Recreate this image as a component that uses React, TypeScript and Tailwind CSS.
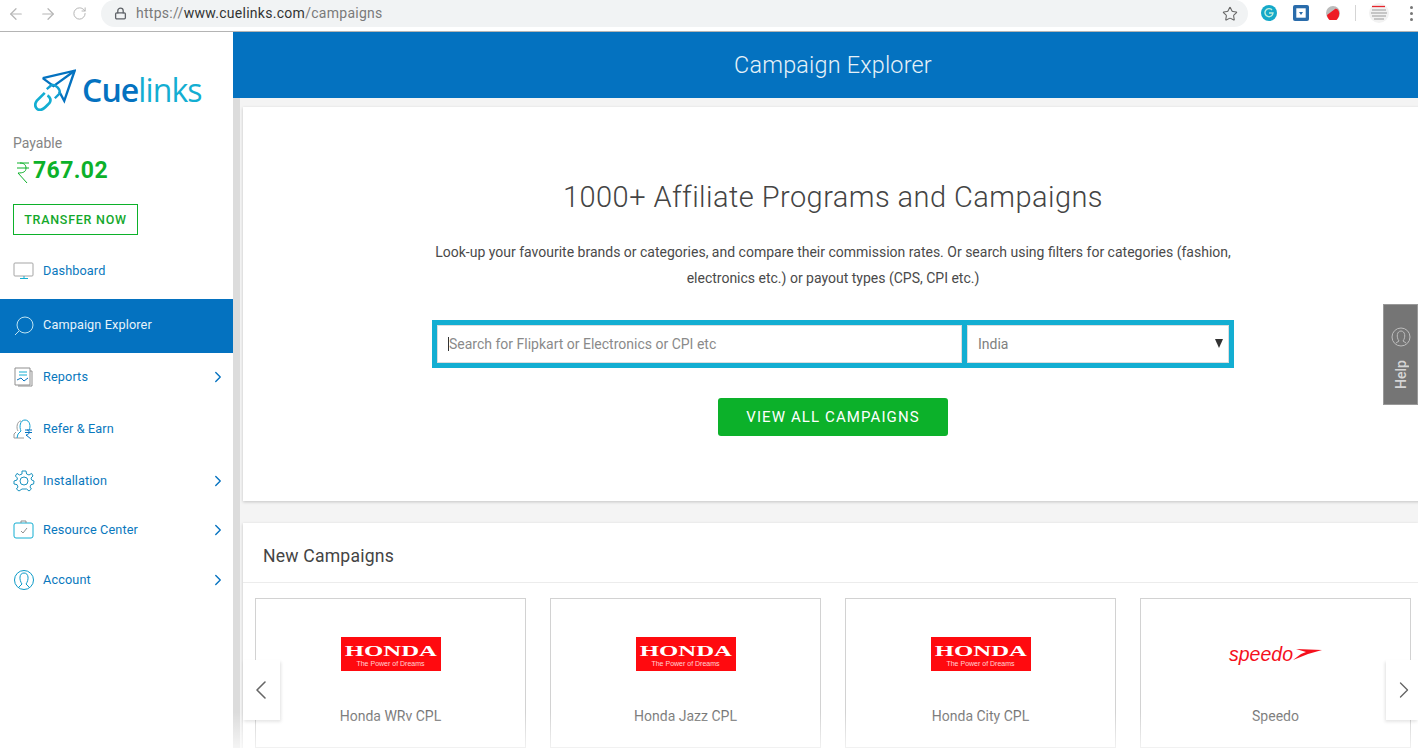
import { ArrowLeft, ArrowRight, ChevronLeft, ChevronRight, Lock, RotateCw, Star } from 'lucide-react';
import type { ReactNode } from 'react';

const iconProps = { width: 22, height: 22, viewBox: '0 0 22 22', fill: 'none', strokeWidth: 1 };

function Logo() {
  return (
    <div className="flex items-center pl-[34px] h-[42px]">
      <svg width="42" height="42" viewBox="42 25 125 125" fill="none" className="mr-[6px] flex-none">
        <path d="M68 52 L163 30 L132 120 L117 92" stroke="#0472c0" strokeWidth="7" strokeLinejoin="miter" />
        <path d="M163 30 L100 76 L68 52" stroke="#0472c0" strokeWidth="7" />
        <path d="M80 85 L95 72 C108 72 122 86 118 98 L104 112" stroke="#13a0d2" strokeWidth="7" />
        <path d="M74 96 L50 120 C40 134 50 150 64 146 C72 144 78 136 88 126 C94 118 90 108 82 104" stroke="#13aed2" strokeWidth="8" />
      </svg>
      <span className="font-['Open_Sans',sans-serif] text-[32px] leading-[36px] tracking-[-0.9px] pb-[1px]">
        <span className="text-[#0472c0] font-semibold">Cue</span>
        <span className="text-[#13aed2] font-normal">links</span>
      </span>
    </div>
  );
}

function NavItem({ label, icon, arrow, active, height }: { label: string; icon: ReactNode; arrow?: boolean; active?: boolean; height: string }) {
  return (
    <div className={`flex items-center pl-[13px] pr-[6px] ${height} ${active ? 'bg-[#0472c0] text-[#e8f3fa]' : 'text-[#0a78bd]'}`}>
      <span className="w-[30px] flex-none">{icon}</span>
      <span className="flex-1 text-[12.7px] tracking-[0.12px]">{label}</span>
      {arrow && <ChevronRight size={18} strokeWidth={1.8} className="text-[#0472c0]" />}
    </div>
  );
}

function CampaignCard({ name, logo }: { name: string; logo: ReactNode }) {
  return (
    <div className="w-[271px] flex-none h-[150px] border border-[#d2d2d2] flex flex-col items-center">
      <div className="h-[100px] w-full flex items-center justify-center pt-[10px]">{logo}</div>
      <div className="w-full text-center pt-[7px] text-[14px] text-[#757575]">{name}</div>
    </div>
  );
}

function Honda() {
  return (
    <div className="w-[100px] h-[34px] bg-[#ff0a0f] flex flex-col items-center justify-center text-white">
      <span className="font-['Liberation_Serif',serif] font-bold text-[15px] leading-[14px] inline-block scale-x-[1.65] mt-[3px]">HONDA</span>
      <span className="font-['Liberation_Sans',sans-serif] text-[7px] leading-[9px] mt-[1px] opacity-80">The Power of Dreams</span>
    </div>
  );
}

function Speedo() {
  return (
    <div className="flex items-center text-[#f5101c]">
      <span className="font-['Liberation_Sans',sans-serif] italic text-[19.5px] leading-[20px]">speedo</span>
      <svg width="30" height="12" viewBox="0 0 30 12" className="-ml-[1px]">
        <path d="M4 1 L30 2 L16 6 L1 12 L9 6 L14 4 Z" fill="#f5101c" />
      </svg>
    </div>
  );
}

export default function App() {
  return (
    <div className="w-[1418px] h-[748px] overflow-hidden relative bg-white font-['Roboto',sans-serif]">
      {/* browser bar */}
      <div className="h-[32px] border-b border-[#b4b4b4] flex items-center pl-[7px] bg-white">
        <ArrowLeft size={18} strokeWidth={1.6} className="text-[#b5b5b5] mr-[14px] mb-[4px]" />
        <ArrowRight size={18} strokeWidth={1.6} className="text-[#b5b5b5] mr-[15px] mb-[4px]" />
        <RotateCw size={15} strokeWidth={1.6} className="text-[#b5b5b5] mr-[14px] mb-[4px]" />
        <div className="w-[1147px] h-[27px] bg-[#f1f3f4] rounded-full flex items-center pl-[13px] pr-[10px] mb-[4px] flex-none">
          <Lock size={13} strokeWidth={2.4} className="text-[#5f6368] mr-[9px]" />
          <span className="flex-1 text-[14px] text-[#7a7a7a] tracking-[0.28px]">
            https://<span className="text-[#333]">www.cuelinks.com</span>/campaigns
          </span>
          <Star size={16} strokeWidth={1.6} className="text-[#666]" />
        </div>
        <div className="flex items-center pl-[13px] mb-[5px]">
          <svg width="16" height="16" viewBox="0 0 16 16" className="mr-[16px]">
            <circle cx="8" cy="8" r="8" fill="#15a9c9" />
            <path d="M11 5 A4 4 0 1 0 12 8 H8" fill="none" stroke="#bfeedd" strokeWidth="1.4" />
          </svg>
          <svg width="16" height="16" viewBox="0 0 16 16" className="mr-[17px]">
            <rect width="16" height="16" rx="2" fill="#2a6cab" />
            <rect x="4" y="4" width="8" height="8" fill="#fff" stroke="#fff" strokeWidth="1.4" />
            <path d="M6 7 H10 L8 10 Z" fill="#2a6cab" />
          </svg>
          <svg width="14" height="14" viewBox="0 0 14 14" className="mr-[15px]">
            <circle cx="7" cy="7" r="7" fill="#bbb" />
            <path d="M1 9 A6 6 0 0 0 13 9 C14 5 11 2 9 3 Z" fill="#ee1c25" />
          </svg>
          <div className="w-px h-[16px] bg-[#d5d5d5] mr-[13px]" />
          <svg width="20" height="20" viewBox="0 0 20 20">
            <circle cx="10" cy="10" r="10" fill="#f2f2f2" />
            <path d="M3 7 H17 M2 10 H18 M3 13 H17 M5 16 H15" stroke="#b8b8b8" strokeWidth="1.3" />
            <path d="M3 3.5 H16" stroke="#e6242b" strokeWidth="1.3" />
          </svg>
          <div className="flex flex-col gap-[3px] ml-[21px]">
            <span className="w-[3px] h-[3px] rounded-full bg-[#777]" />
            <span className="w-[3px] h-[3px] rounded-full bg-[#777]" />
            <span className="w-[3px] h-[3px] rounded-full bg-[#777]" />
          </div>
        </div>
      </div>

      <div className="flex h-[716px]">
        {/* sidebar */}
        <aside className="w-[233px] flex-none bg-white pt-[37px]">
          <Logo />
          <div className="pl-[13px] mt-[24px] text-[14px] leading-[16px] text-[#858585]">Payable</div>
          <div className="pl-[16px] mt-[5px] flex items-center h-[30px] text-[#0cb12a]">
            <svg width="14" height="23" viewBox="0 0 14 23" fill="none" stroke="#0cb12a" strokeWidth="1" className="mr-[3px] mt-[3px] flex-none">
              <path d="M1 2 H13 M1 7 H13 M4 2 C8 2 10 4 10 7 C10 11 7 12 2 12 L11 22" />
            </svg>
            <span className="text-[23px] font-bold tracking-[0.4px] leading-[30px]">767.02</span>
          </div>
          <div className="ml-[13px] mt-[18px] w-[125px] h-[31px] border border-[#0cb12a] flex items-center justify-center pt-[1px] text-[12.5px] font-medium tracking-[0.75px] text-[#14a82c]">
            TRANSFER NOW
          </div>
          <nav className="mt-[9px]">
            <NavItem
              label="Dashboard"
              height="h-[55px] pb-[2px]"
              icon={
                <svg {...iconProps} stroke="#a5a5a5">
                  <rect x="1" y="3" width="19" height="13" rx="1" />
                  <path d="M11 16 V18 M7 18.5 H15" stroke="#13aed2" />
                </svg>
              }
            />
            <NavItem
              active
              label="Campaign Explorer"
              height="h-[54px] pb-[2px]"
              icon={
                <svg {...iconProps} stroke="#bfe4f2">
                  <circle cx="12" cy="11" r="8" />
                  <path d="M6 17 L2 21" />
                </svg>
              }
            />
            <NavItem
              arrow
              label="Reports"
              height="h-[48px]"
              icon={
                <svg {...iconProps} stroke="#8f8f8f">
                  <path d="M2 2 H17 V19 H2 Z" />
                  <path d="M17 5 H19 V20 H5" />
                  <path d="M6 6 H14 M6 9 H14" stroke="#13aed2" />
                  <path d="M4 14 L8 12 L11 15 L15 12" stroke="#0472c0" />
                </svg>
              }
            />
            <NavItem
              label="Refer & Earn"
              height="h-[55px]"
              icon={
                <svg {...iconProps} stroke="#13a0d2">
                  <path d="M5 13 C3 10 4 3 8 3 M3 14 L1 16 V20 H11" stroke="#9a9a9a" />
                  <path d="M8 13 C6 9 7 2 12 2 C17 2 18 9 16 12 M8 13 L5 16 L4 20" />
                  <path d="M12 12 H19 M12 14.5 H19 M14 12 C17 12 17 17 13 17 L18 21" stroke="#0472c0" />
                </svg>
              }
            />
            <NavItem
              arrow
              label="Installation"
              height="h-[49px]"
              icon={
                <svg {...iconProps} stroke="#1a93bf">
                  <path d="M9 1 H13 L13.6 4 L16 5 L18.6 3.4 L20 6 L18 8 L18.6 10 L21 11 L20.6 14 L18 14.6 L17 17 L18.4 19 L16 21 L13.6 19 H9 L6 21 L3.4 19 L5 17 L4 14.6 L1 14 V11 L4 10 L4.4 8 L2.4 6 L4 3.4 L6.4 5 L9 4 Z" />
                  <circle cx="11" cy="11" r="4" />
                </svg>
              }
            />
            <NavItem
              arrow
              label="Resource Center"
              height="h-[49px]"
              icon={
                <svg {...iconProps} stroke="#13aed2">
                  <rect x="1" y="4" width="19" height="15" rx="2" />
                  <path d="M8 4 V2 H13 V4" stroke="#8f8f8f" />
                  <path d="M8 12 L10 14 L14 9" stroke="#8f8f8f" />
                </svg>
              }
            />
            <NavItem
              arrow
              label="Account"
              height="h-[52px]"
              icon={
                <svg {...iconProps} stroke="#0a9ac8">
                  <circle cx="11" cy="11" r="9.5" />
                  <path d="M9 15 C6 11 6 4 11 4 C16 4 16 11 13 15 L16 18 M9 15 L6 18" />
                </svg>
              }
            />
          </nav>
        </aside>

        {/* main */}
        <main className="flex-1 min-w-0 bg-[#f4f4f4] border-l-[7px] border-[#dcdcdc]">
          <header className="-ml-[7px] h-[66px] bg-[#0472c0] flex items-center justify-center text-[23.4px] font-light text-[#e6f1f8] tracking-[0.2px] pl-[15px] pt-[1px]">
            Campaign Explorer
          </header>
          <div className="pl-[3px] pt-[9px]">
            <section className="w-[1180px] h-[394px] bg-white shadow-[0_1px_3px_rgba(0,0,0,0.2)] flex flex-col items-center pt-[72px]">
              <h1 className="text-[29px] leading-[36px] font-light text-[#444] tracking-[0.44px]">1000+ Affiliate Programs and Campaigns</h1>
              <p className="mt-[24px] w-[820px] text-center text-[14px] leading-[26px] text-[#4a4a4a]">
                Look-up your favourite brands or categories, and compare their commission rates. Or search using filters for categories (fashion,
                electronics etc.) or payout types (CPS, CPI etc.)
              </p>
              <div className="mt-[29px] w-[802px] h-[48px] bg-[#13aed2] p-[5px] flex gap-[5px]">
                <div className="w-[525px] bg-white border border-[#dddddd] flex items-center pl-[10px] text-[14px] text-[#8a8a8a]">
                  <span className="w-px h-[14px] bg-[#333]" />
                  Search for Flipkart or Electronics or CPI etc
                </div>
                <div className="flex-1 bg-white border border-[#dddddd] flex items-center pl-[10px] pr-[5px] justify-between text-[14px] text-[#808080]">
                  <span>India</span>
                  <span className="w-0 h-0 border-l-[4px] border-r-[4px] border-t-[9px] border-l-transparent border-r-transparent border-t-[#333] mb-[2px]" />
                </div>
              </div>
              <div className="mt-[30px] w-[230px] h-[38px] rounded-[3px] bg-[#0cb12a] flex items-center justify-center pt-[1px] text-[15px] tracking-[1.1px] text-white">
                VIEW ALL CAMPAIGNS
              </div>
            </section>
            <section className="mt-[22px] bg-white shadow-[0_1px_3px_rgba(0,0,0,0.2)] h-[300px]">
              <div className="h-[60px] border-b border-[#ececec] flex items-center pl-[20px] pt-[8px] text-[17.6px] text-[#444] tracking-[0.2px]">New Campaigns</div>
              <div className="flex gap-[24px] pl-[12px] pt-[15px]">
                <CampaignCard name="Honda WRv CPL" logo={<Honda />} />
                <CampaignCard name="Honda Jazz CPL" logo={<Honda />} />
                <CampaignCard name="Honda City CPL" logo={<Honda />} />
                <CampaignCard name="Speedo" logo={<Speedo />} />
              </div>
            </section>
          </div>
        </main>
      </div>

      {/* carousel arrows */}
      <div className="absolute left-[243px] top-[660px] w-[37px] h-[60px] bg-white shadow-[1px_2px_3px_rgba(0,0,0,0.12)] flex items-center justify-center">
        <ChevronLeft size={32} strokeWidth={1.2} className="text-[#666] -ml-[2px]" />
      </div>
      <div className="absolute right-0 top-[660px] w-[32px] h-[60px] bg-white shadow-[-1px_2px_3px_rgba(0,0,0,0.12)] flex items-center justify-center">
        <ChevronRight size={32} strokeWidth={1.2} className="text-[#666] ml-[4px]" />
      </div>

      {/* help tab */}
      <div className="absolute right-0 top-[304px] w-[35px] h-[101px] bg-[#757575] border border-[#999] flex flex-col items-center pt-[22px] text-[#d5d5d5]">
        <svg width="20" height="20" viewBox="0 0 20 20" fill="none" stroke="#bdbdbd" strokeWidth="1">
          <circle cx="10" cy="10" r="9" />
          <path d="M8 14 C5 10 6 4 10 4 C14 4 15 10 12 14 L15 16 M8 14 L5 16" />
        </svg>
        <span className="mt-[13px] text-[14px] leading-[16px] font-medium [writing-mode:vertical-rl] rotate-180">Help</span>
      </div>

      {/* bottom fade */}
      <div className="absolute left-0 right-0 bottom-0 h-[36px] bg-gradient-to-b from-transparent to-[#ffffff] opacity-70 pointer-events-none" />
    </div>
  );
}
